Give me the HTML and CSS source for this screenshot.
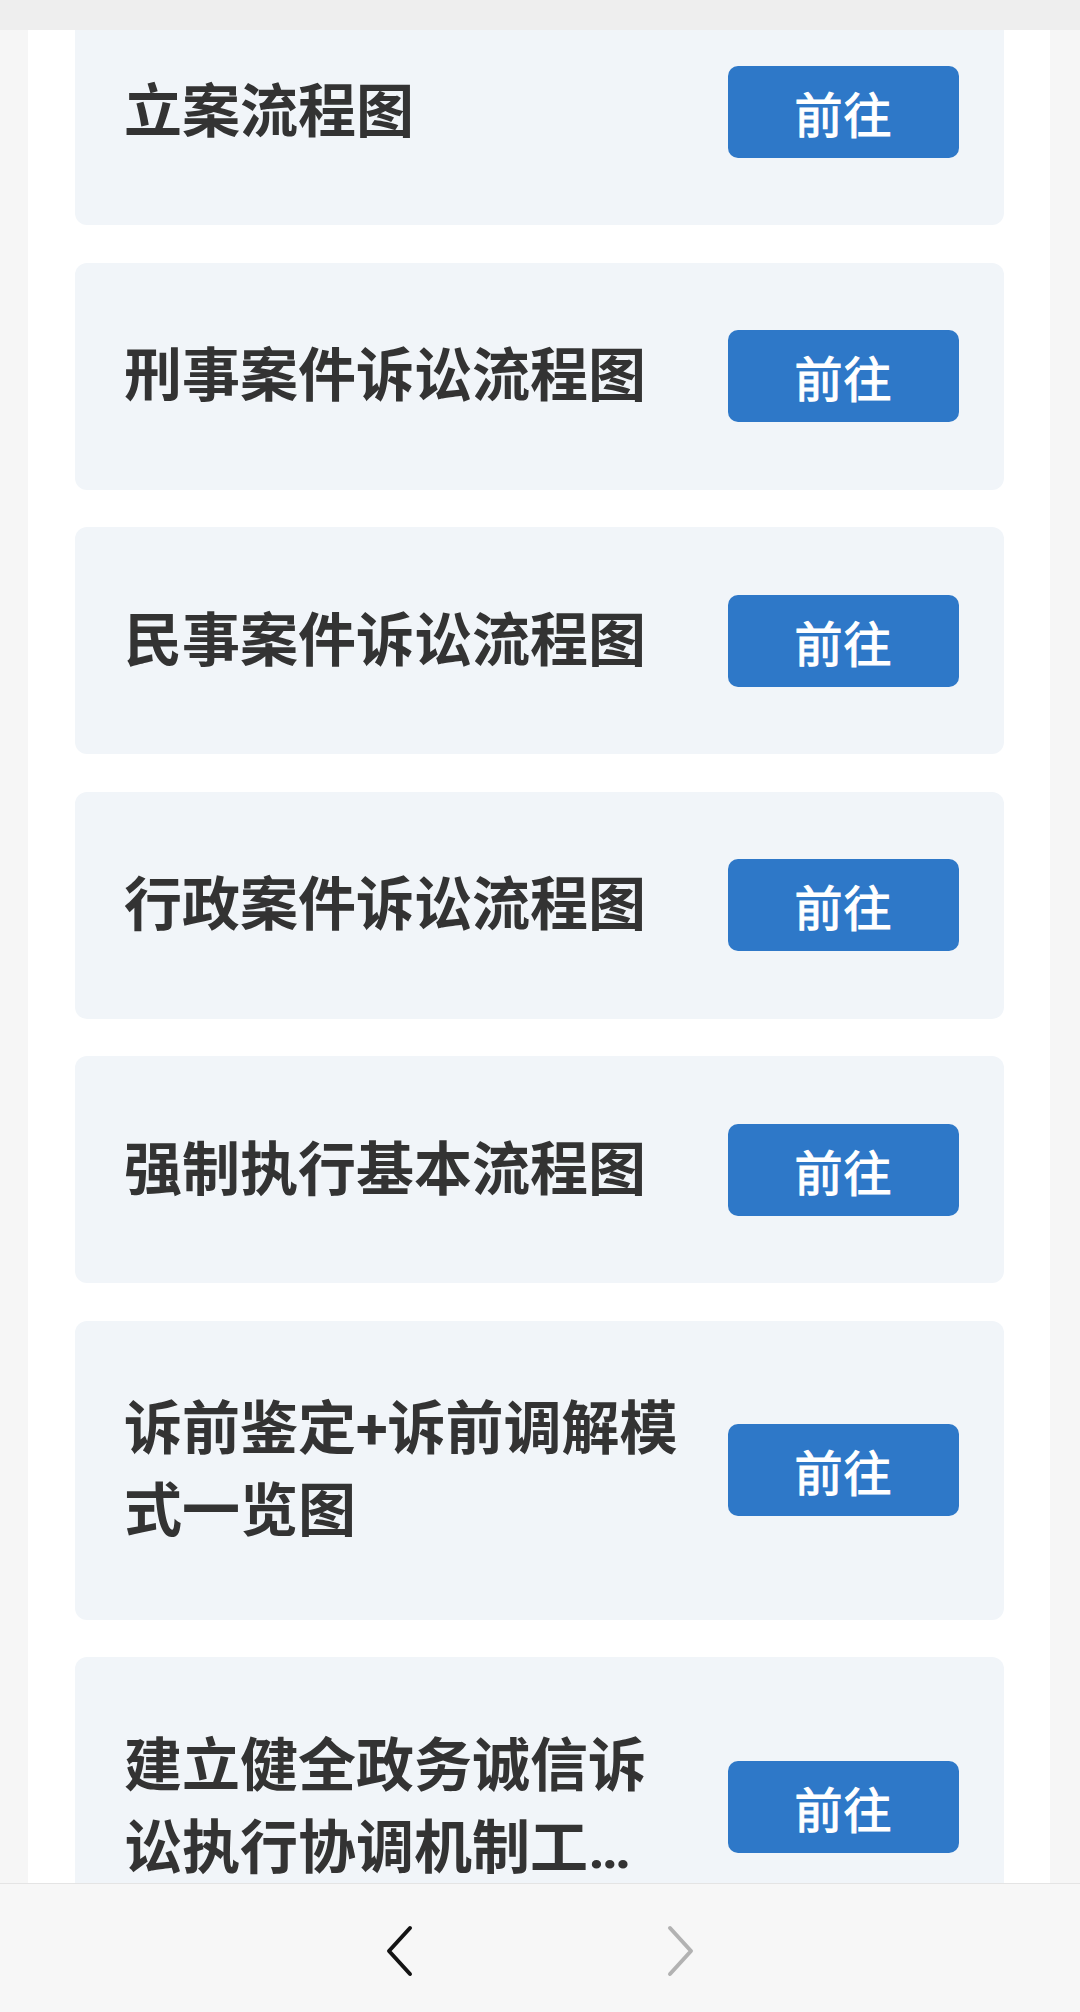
FILE: index.html
```html
<!DOCTYPE html>
<html lang="zh-CN">
<head>
<meta charset="utf-8">
<title>流程图</title>
<link rel="stylesheet" href="styles.css">
</head>
<body>
<div class="topbar"></div>
<main class="page">
  <ul class="list">
    <li class="card"><span class="title">立案流程图</span><a class="go">前往</a></li>
    <li class="card"><span class="title">刑事案件诉讼流程图</span><a class="go">前往</a></li>
    <li class="card"><span class="title">民事案件诉讼流程图</span><a class="go">前往</a></li>
    <li class="card"><span class="title">行政案件诉讼流程图</span><a class="go">前往</a></li>
    <li class="card"><span class="title">强制执行基本流程图</span><a class="go">前往</a></li>
    <li class="card"><span class="title">诉前鉴定+诉前调解模式一览图</span><a class="go">前往</a></li>
    <li class="card"><span class="title">建立健全政务诚信诉讼执行协调机制工作方案流程图</span><a class="go">前往</a></li>
  </ul>
</main>
<nav class="navbar">
  <span class="nav-btn back">
    <svg width="30" height="52" viewBox="0 0 30 52"><polyline points="25,3 4,26 25,49" fill="none" stroke="currentColor" stroke-width="4" stroke-linecap="round" stroke-linejoin="round"/></svg>
  </span>
  <span class="nav-btn fwd">
    <svg width="30" height="52" viewBox="0 0 30 52"><polyline points="5,3 26,26 5,49" fill="none" stroke="currentColor" stroke-width="4" stroke-linecap="round" stroke-linejoin="round"/></svg>
  </span>
</nav>
</body>
</html>
```
FILE: styles.css
```css
* { box-sizing: border-box; }
html, body { margin: 0; padding: 0; }
body {
  background: #f6f6f6;
  font-family: Roboto, "Noto Sans CJK SC", "Noto Sans", sans-serif;
  color: #333333;
  height: 2012px;
  overflow: hidden;
}
.topbar {
  position: fixed;
  top: 0; left: 0; right: 0;
  height: 30px;
  background: #eeeeee;
  z-index: 5;
}
.page {
  margin-left: 28px;
  width: 1022px;
  background: #ffffff;
  min-height: 2100px;
  padding: 0 46px 0 47px;
}
.list {
  list-style: none;
  margin: -2px 0 0 0;
  padding: 0;
  display: flex;
  flex-direction: column;
  gap: 37.5px;
}
.card {
  background: #f1f5f9;
  border-radius: 12px;
  padding: 67.5px 45px 67.5px 49px;
  display: flex;
  align-items: center;
  gap: 45px;
}
.title {
  flex: 1;
  min-width: 0;
  font-size: 58px;
  line-height: 82px;
  font-weight: 700;
  color: #333333;
  display: -webkit-box;
  -webkit-box-orient: vertical;
  -webkit-line-clamp: 2;
  overflow: hidden;
}
.go {
  flex: none;
  width: 231px;
  height: 92px;
  border-radius: 10px;
  background: #2e78c8;
  color: #ffffff;
  font-size: 48px;
  font-weight: 400;
  -webkit-text-stroke: 1.2px #ffffff;
  display: flex;
  align-items: center;
  justify-content: center;
  letter-spacing: 1px;
}
.navbar {
  position: fixed;
  left: 0; right: 0; bottom: 0;
  height: 129px;
  background: #f7f7f7;
  border-top: 1px solid #e4e4e4;
  padding-top: 6px;
  display: flex;
  align-items: center;
  justify-content: center;
  gap: 220px;
  z-index: 5;
}
.nav-btn {
  width: 60px;
  height: 60px;
  display: flex;
  align-items: center;
  justify-content: center;
}
.nav-btn.back { color: #141414; }
.nav-btn.fwd { color: #b2b2b2; }
```
